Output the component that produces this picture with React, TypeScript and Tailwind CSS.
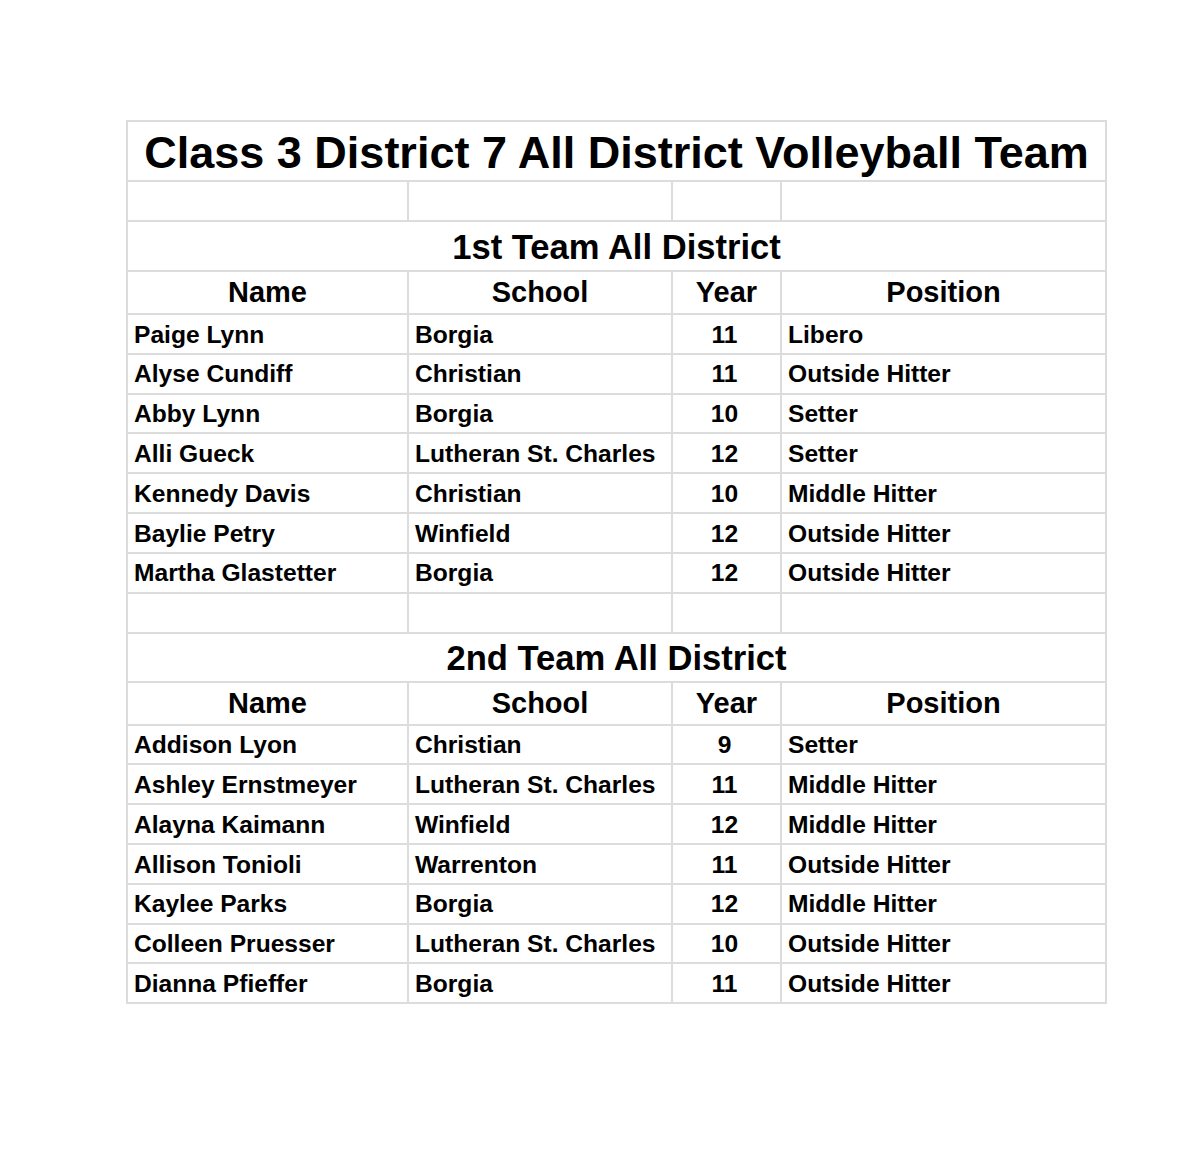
import React from "react";

const first = [
  ["Paige Lynn", "Borgia", "11", "Libero"],
  ["Alyse Cundiff", "Christian", "11", "Outside Hitter"],
  ["Abby Lynn", "Borgia", "10", "Setter"],
  ["Alli Gueck", "Lutheran St. Charles", "12", "Setter"],
  ["Kennedy Davis", "Christian", "10", "Middle Hitter"],
  ["Baylie Petry", "Winfield", "12", "Outside Hitter"],
  ["Martha Glastetter", "Borgia", "12", "Outside Hitter"],
];

const second = [
  ["Addison Lyon", "Christian", "9", "Setter"],
  ["Ashley Ernstmeyer", "Lutheran St. Charles", "11", "Middle Hitter"],
  ["Alayna Kaimann", "Winfield", "12", "Middle Hitter"],
  ["Allison Tonioli", "Warrenton", "11", "Outside Hitter"],
  ["Kaylee Parks", "Borgia", "12", "Middle Hitter"],
  ["Colleen Pruesser", "Lutheran St. Charles", "10", "Outside Hitter"],
  ["Dianna Pfieffer", "Borgia", "11", "Outside Hitter"],
];

const td = "border-2 border-[#dcdcdc] p-0 align-middle";

function HeaderRow() {
  return (
    <tr className="h-[43px] text-[29px]">
      <td className={`${td} text-center`}>Name</td>
      <td className={`${td} text-center`}>School</td>
      <td className={`${td} text-center`}>Year</td>
      <td className={`${td} text-center`}>Position</td>
    </tr>
  );
}

function DataRows({ rows }: { rows: string[][] }) {
  return (
    <>
      {rows.map((r, i) => (
        <tr key={i} className="h-[39.8px] text-[24.6px]">
          <td className={`${td} pl-[6px] pt-[2px]`}>{r[0]}</td>
          <td className={`${td} pl-[6px] pt-[2px]`}>{r[1]}</td>
          <td className={`${td} pr-[4px] pt-[2px] text-center`}>{r[2]}</td>
          <td className={`${td} pl-[6px] pt-[2px]`}>{r[3]}</td>
        </tr>
      ))}
    </>
  );
}

function EmptyRow() {
  return (
    <tr className="h-[40px]">
      <td className={td}></td>
      <td className={td}></td>
      <td className={td}></td>
      <td className={td}></td>
    </tr>
  );
}

export default function App() {
  return (
    <div className="w-[1200px] h-[1175px] bg-white pt-[120px] pl-[126px] font-['Liberation_Sans',Arial,sans-serif] font-bold text-black leading-none">
      <table className="border-collapse table-fixed w-[981px]">
        <colgroup>
          <col className="w-[281px]" />
          <col className="w-[264px]" />
          <col className="w-[109px]" />
          <col className="w-[325px]" />
        </colgroup>
        <tbody>
          <tr className="h-[60px]">
            <td colSpan={4} className={`${td} text-center text-[45px] pt-[2px]`}>
              Class 3 District 7 All District Volleyball Team
            </td>
          </tr>
          <EmptyRow />
          <tr className="h-[50px]">
            <td colSpan={4} className={`${td} text-center text-[34.6px] pt-[2px]`}>
              1st Team All District
            </td>
          </tr>
          <HeaderRow />
          <DataRows rows={first} />
          <EmptyRow />
          <tr className="h-[49px]">
            <td colSpan={4} className={`${td} text-center text-[34.6px] pt-[2px]`}>
              2nd Team All District
            </td>
          </tr>
          <HeaderRow />
          <DataRows rows={second} />
        </tbody>
      </table>
    </div>
  );
}
